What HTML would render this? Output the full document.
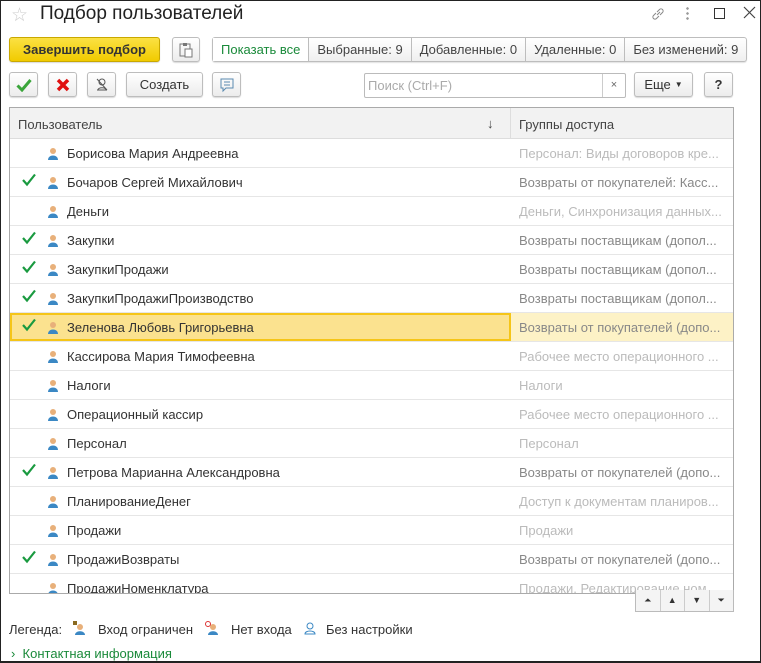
<!DOCTYPE html>
<html><head><meta charset="utf-8"><style>
*{box-sizing:border-box;margin:0;padding:0}
body{width:761px;height:663px;overflow:hidden;background:#fff;font-family:"Liberation Sans",sans-serif;font-size:13px;color:#333;position:relative}
.frame{position:absolute;left:0;top:0;width:761px;height:663px;border:1px solid #222;border-bottom-width:2px}
.abs{position:absolute}
.btn{position:absolute;height:26px;border:1px solid #bdbdbd;border-radius:3px;background:linear-gradient(#fff,#ececec);box-shadow:0 1px 1px rgba(0,0,0,.15);display:flex;align-items:center;justify-content:center;font-size:13px;color:#333}
.seg{position:absolute;left:212px;top:37px;height:25px;border:1px solid #bdbdbd;border-radius:3px;display:flex;background:linear-gradient(#fff,#efefef);box-shadow:0 1px 1px rgba(0,0,0,.12)}
.seg div{padding:0 8px;line-height:23px;border-left:1px solid #bdbdbd;font-size:13px;color:#444}
.seg div:first-child{border-left:none;color:#1a8a3a;background:#fff}
.tbl{position:absolute;left:9px;top:107px;width:725px;height:487px;border:1px solid #aaa;overflow:hidden}
.hdr{height:31px;background:#f2f2f2;border-bottom:1px solid #ddd;position:relative;font-size:13px;color:#444}
.row{height:29px;border-bottom:1px solid #e6e6e6;position:relative;font-size:13px}
.row .n{position:absolute;left:57px;top:7px;color:#333}
.row .g{position:absolute;left:509px;top:7px;color:#bbb;white-space:nowrap}
.row.c .g{color:#888}
.row .ck{position:absolute;left:11px;top:5px}
.row .u{position:absolute;left:37px;top:8px}
.row.sel{background:#fdf2c6}
.row.sel .l{position:absolute;left:0;top:0;width:501px;height:28px;background:#fbe28f;border:2px solid #f5c518}
</style></head><body>
<div class="frame"></div>
<div class="abs" style="left:11px;top:4px;font-size:19px;color:#ccc">☆</div>
<div class="abs" style="left:40px;top:3px;font-size:19px;color:#222">Подбор пользователей</div>
<svg class="abs" style="left:650px;top:6px" width="16" height="16" viewBox="0 0 16 16"><path d="M7 9l3-3M6 7L3.5 9.5a2 2 0 003 3L9 10M10 9l2.5-2.5a2 2 0 00-3-3L7 6" stroke="#888" fill="none"/></svg>
<div class="abs" style="left:686px;top:6px;width:3px;height:14px;background:radial-gradient(circle,#999 1.2px,transparent 1.4px) 0 0/3px 5px"></div>
<div class="abs" style="left:714px;top:8px;width:11px;height:11px;border:1.5px solid #333"></div>
<svg class="abs" style="left:743px;top:6px" width="13" height="13"><path d="M1 1l11 11M12 1L1 12" stroke="#444" stroke-width="1.2"/></svg>

<div class="btn" style="left:9px;top:37px;width:151px;height:25px;background:linear-gradient(#fbe143,#f1cb00);border-color:#c9a800;font-weight:bold;color:#333">Завершить подбор</div>
<div class="btn" style="left:172px;top:37px;width:28px;height:25px"><svg width="16" height="16"><rect x="2" y="2" width="10" height="12" fill="none" stroke="#777"/><rect x="5" y="1" width="4" height="3" fill="#777"/><rect x="7" y="7" width="7" height="8" fill="#fff" stroke="#777"/></svg></div>
<div class="seg"><div>Показать все</div><div>Выбранные: 9</div><div>Добавленные: 0</div><div>Удаленные: 0</div><div>Без изменений: 9</div></div>

<div class="btn" style="left:9px;top:72px;width:29px;height:25px"><svg width="16" height="14"><path d="M1.5 7.5l4.5 4.5 8.5-10" stroke="#3aa53a" stroke-width="3" fill="none"/></svg></div>
<div class="btn" style="left:48px;top:72px;width:29px;height:25px"><svg width="14" height="14"><path d="M2 2l10 10M12 2L2 12" stroke="#e01010" stroke-width="3.5"/></svg></div>
<div class="btn" style="left:87px;top:72px;width:29px;height:25px"><svg width="16" height="16"><circle cx="8" cy="5" r="3" fill="none" stroke="#555"/><path d="M3 13h10M4 13c0-3 8-3 8 0M3 2l10 11" stroke="#555" fill="none"/></svg></div>
<div class="btn" style="left:126px;top:72px;width:77px;height:25px">Создать</div>
<div class="btn" style="left:212px;top:72px;width:29px;height:25px"><svg width="16" height="16"><path d="M2 2h12v9H7l-3 3v-3H2z" fill="none" stroke="#5a8ab0"/><path d="M5 5h6M5 8h6" stroke="#5a8ab0"/></svg></div>
<div class="abs" style="left:364px;top:73px;width:262px;height:25px;border:1px solid #bbb;border-radius:2px;color:#aaa;padding:4px 3px;font-size:13px">Поиск (Ctrl+F)<span style="position:absolute;right:0;top:0;width:23px;height:23px;border-left:1px solid #ccc;text-align:center;color:#666;line-height:22px;font-size:11px">×</span></div>
<div class="btn" style="left:634px;top:72px;width:59px;height:25px">Еще <span style="font-size:8px;margin-left:4px">▼</span></div>
<div class="btn" style="left:704px;top:72px;width:29px;height:25px;font-weight:bold">?</div>

<div class="tbl">
<div class="hdr"><span class="abs" style="left:8px;top:9px">Пользователь</span><span class="abs" style="left:477px;top:8px">↓</span><div class="abs" style="left:500px;top:0;width:1px;height:31px;background:#ddd"></div><span class="abs" style="left:509px;top:9px">Группы доступа</span></div>
<div id="rows"></div>
</div>
<div class="abs" style="left:635px;top:590px;width:99px;height:22px;border:1px solid #bbb;border-top:none;display:flex;background:#f4f4f4;font-size:9px;color:#333">
<div style="flex:1;text-align:center;line-height:21px;border-right:1px solid #ccc">⏶</div><div style="flex:1;text-align:center;line-height:21px;border-right:1px solid #ccc">▲</div><div style="flex:1;text-align:center;line-height:21px;border-right:1px solid #ccc">▼</div><div style="flex:1;text-align:center;line-height:21px">⏷</div></div>
<div class="abs" style="left:9px;top:622px;font-size:13px;color:#333">Легенда:</div>
<svg class="abs" style="left:72px;top:621px" width="14" height="14"><circle cx="8" cy="6" r="3" fill="#e8b07a"/><path d="M3 14c0-5 10-5 10 0z" fill="#3b88c4"/><rect x="1" y="0" width="4" height="4" fill="#8a6a20"/></svg>
<div class="abs" style="left:98px;top:622px;font-size:13px">Вход ограничен</div>
<svg class="abs" style="left:205px;top:621px" width="14" height="14"><circle cx="8" cy="6" r="3" fill="#e8b07a"/><path d="M3 14c0-5 10-5 10 0z" fill="#3b88c4"/><circle cx="3" cy="3" r="2.5" fill="none" stroke="#d33"/></svg>
<div class="abs" style="left:231px;top:622px;font-size:13px">Нет входа</div>
<svg class="abs" style="left:304px;top:621px" width="12" height="14"><circle cx="6" cy="5" r="3" fill="none" stroke="#3b88c4"/><path d="M1 13c0-4 10-4 10 0z" fill="none" stroke="#3b88c4"/></svg>
<div class="abs" style="left:326px;top:622px;font-size:13px">Без настройки</div>
<div class="abs" style="left:11px;top:646px;font-size:13px;color:#1a8a3a">›&nbsp;&nbsp;Контактная информация</div>
<script>
var d=[["Борисова Мария Андреевна","Персонал: Виды договоров кре...",0],["Бочаров Сергей Михайлович","Возвраты от покупателей: Касс...",1],["Деньги","Деньги, Синхронизация данных...",0],["Закупки","Возвраты поставщикам (допол...",1],["ЗакупкиПродажи","Возвраты поставщикам (допол...",1],["ЗакупкиПродажиПроизводство","Возвраты поставщикам (допол...",1],["Зеленова Любовь Григорьевна","Возвраты от покупателей (допо...",2],["Кассирова Мария Тимофеевна","Рабочее место операционного ...",0],["Налоги","Налоги",0],["Операционный кассир","Рабочее место операционного ...",0],["Персонал","Персонал",0],["Петрова Марианна Александровна","Возвраты от покупателей (допо...",1],["ПланированиеДенег","Доступ к документам планиров...",0],["Продажи","Продажи",0],["ПродажиВозвраты","Возвраты от покупателей (допо...",1],["ПродажиНоменклатура","Продажи, Редактирование ном...",0]];
var u='<svg class="u" width="12" height="13"><circle cx="6" cy="4" r="3" fill="#e8b07a"/><path d="M1 13c0-6 10-6 10 0z" fill="#3b88c4"/></svg>';
var ck='<svg class="ck" width="16" height="14"><path d="M2 7l4 4.5 8-10" stroke="#1a9a40" stroke-width="2.2" fill="none"/></svg>';
var h='';d.forEach(function(r){h+='<div class="row'+(r[2]?' c':'')+(r[2]==2?' sel':'')+'">'+(r[2]==2?'<div class="l"></div>':'')+(r[2]?ck:'')+u+'<span class="n">'+r[0]+'</span><span class="g">'+r[1]+'</span></div>';});
document.getElementById('rows').innerHTML=h;
</script>
</body></html>
